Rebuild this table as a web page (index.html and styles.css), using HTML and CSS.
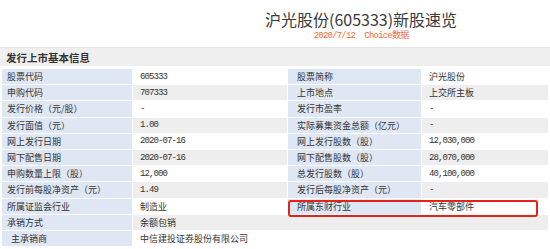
FILE: index.html
```html
<!DOCTYPE html>
<html lang="zh-CN">
<head>
<meta charset="utf-8">
<title>沪光股份新股速览</title>
<link rel="stylesheet" href="styles.css">
</head>
<body>
<div class="page">
  <header class="title-block">
    <div class="title-inner">
      <h1 class="title">沪光股份(605333)新股速览</h1>
      <div class="sub">2020/7/12&nbsp;&nbsp;Choice数据</div>
    </div>
  </header>
  <div class="section-head">发行上市基本信息</div>
  <div class="grid">
    <div class="lab">股票代码</div><div class="val num">605333</div><div class="lab">股票简称</div><div class="val">沪光股份</div>
    <div class="lab">申购代码</div><div class="val num alt">707333</div><div class="lab">上市地点</div><div class="val alt">上交所主板</div>
    <div class="lab">发行价格（元/股）</div><div class="val num">-</div><div class="lab">发行市盈率</div><div class="val num">-</div>
    <div class="lab">发行面值（元）</div><div class="val num alt">1.00</div><div class="lab">实际募集资金总额（亿元）</div><div class="val num alt">-</div>
    <div class="lab">网上发行日期</div><div class="val num">2020-07-16</div><div class="lab">网上发行股数（股）</div><div class="val num">12,030,000</div>
    <div class="lab">网下配售日期</div><div class="val num alt">2020-07-16</div><div class="lab">网下配售股数（股）</div><div class="val num alt">28,070,000</div>
    <div class="lab">申购数量上限（股）</div><div class="val num">12,000</div><div class="lab">总发行股数（股）</div><div class="val num">40,100,000</div>
    <div class="lab">发行前每股净资产（元）</div><div class="val num alt">1.49</div><div class="lab">发行后每股净资产（元）</div><div class="val num alt">-</div>
    <div class="lab">所属证监会行业</div><div class="val">制造业</div><div class="lab">所属东财行业</div><div class="val">汽车零部件</div>
    <div class="lab">承销方式</div><div class="val span alt">余额包销</div>
    <div class="lab">主承销商</div><div class="val span">中信建投证券股份有限公司</div>
    <div class="highlight"></div>
  </div>
</div>
</body>
</html>
```

FILE: styles.css
```css
html, body {
  margin: 0;
  padding: 0;
  background: #ffffff;
}
.page {
  width: 550px;
  height: 249px;
  overflow: hidden;
  font-family: "Noto Sans CJK SC", "Noto Sans", sans-serif;
  color: #333333;
}
.title-block {
  height: 47px;
  padding-left: 265px;
  box-sizing: border-box;
}
.title-inner {
  display: inline-block;
  text-align: center;
  padding-top: 9px;
}
.title {
  margin: 0;
  font-size: 16px;
  line-height: 21px;
  font-weight: normal;
  color: #3a3a3a;
  white-space: nowrap;
}
.sub {
  font-family: "Liberation Mono", "Noto Sans CJK SC", monospace;
  font-size: 9px;
  line-height: 10px;
  letter-spacing: -0.8px;
  color: #f26a3d;
  margin-top: 1px;
  white-space: nowrap;
}
.section-head {
  height: 19px;
  line-height: 19px;
  background: #efefef;
  border-top: 1px solid #e4e4e4;
  box-sizing: border-box;
  padding-left: 6px;
  font-size: 10.5px;
  font-weight: bold;
  color: #333333;
  margin-bottom: 3px;
}
.grid {
  position: relative;
  margin: 0 2px;
  display: grid;
  grid-template-columns: 130px 154px 133px 1fr;
  grid-auto-rows: 15.2px;
  gap: 1px;
  font-size: 9px;
}
.lab, .val {
  display: flex;
  align-items: center;
  white-space: nowrap;
  overflow: hidden;
}
.lab {
  background: #dfe6f4;
  padding-left: 5px;
  color: #333333;
}
.val {
  background: #ffffff;
  padding-left: 7px;
  color: #333333;
}
.val.alt {
  background: #eeeeee;
}
.grid > .lab:nth-child(4n+3) {
  padding-left: 9px;
}
.num {
  font-family: "Liberation Mono", monospace;
  letter-spacing: -0.9px;
}
.span {
  grid-column: 2 / 5;
}
.highlight {
  position: absolute;
  left: 286px;
  top: 131px;
  width: 250px;
  height: 17px;
  border: 2px solid #e5231b;
  border-radius: 3px;
  box-sizing: border-box;
}
```
